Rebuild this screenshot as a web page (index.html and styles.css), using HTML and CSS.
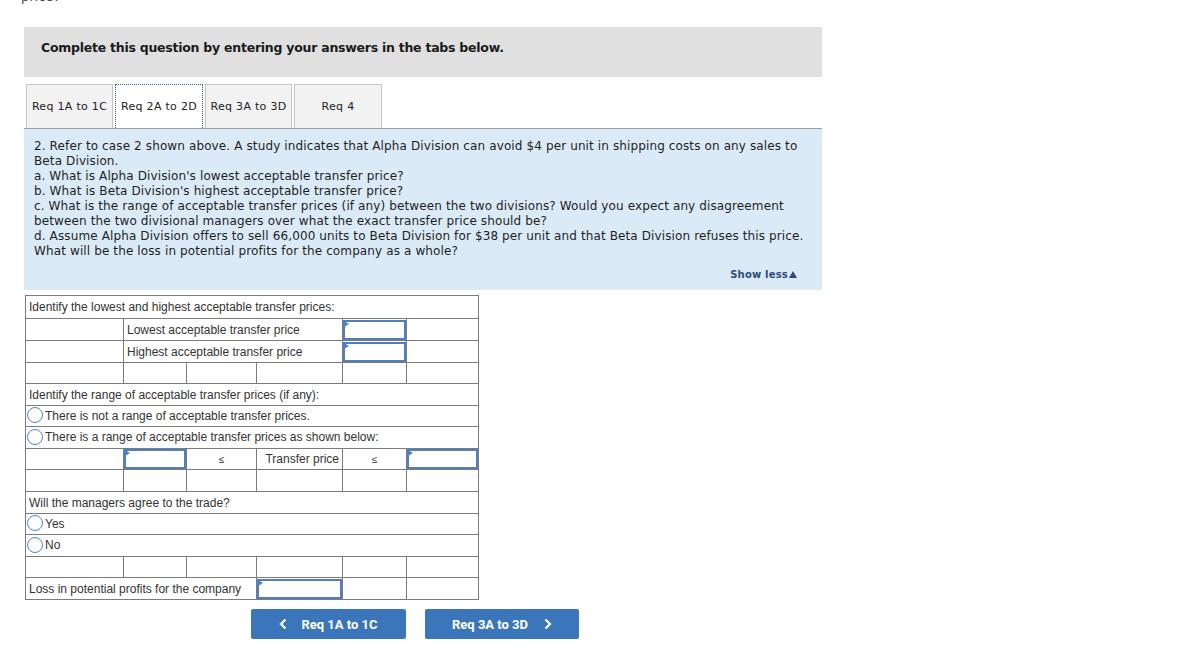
FILE: index.html
```html
<!DOCTYPE html>
<html>
<head>
<meta charset="utf-8">
<title>Transfer pricing</title>
<link rel="stylesheet" href="styles.css">
</head>
<body>
<div class="page">
  <div class="prev">price?</div>
  <div class="instructions">Complete this question by entering your answers in the tabs below.</div>
  <div class="tabs">
    <div class="tab t1">Req 1A to 1C</div>
    <div class="tab t2 active">Req 2A to 2D</div>
    <div class="tab t3">Req 3A to 3D</div>
    <div class="tab t4">Req 4</div>
  </div>
  <div class="question">
    <p>2. Refer to case 2 shown above. A study indicates that Alpha Division can avoid $4 per unit in shipping costs on any sales to Beta Division.</p>
    <p>a. What is Alpha Division's lowest acceptable transfer price?</p>
    <p>b. What is Beta Division's highest acceptable transfer price?</p>
    <p>c. What is the range of acceptable transfer prices (if any) between the two divisions? Would you expect any disagreement between the two divisional managers over what the exact transfer price should be?</p>
    <p>d. Assume Alpha Division offers to sell 66,000 units to Beta Division for $38 per unit and that Beta Division refuses this price. What will be the loss in potential profits for the company as a whole?</p>
    <div class="showless">Show less<span class="tri"></span></div>
  </div>
  <table class="answer">
    <colgroup>
      <col class="c1"><col class="c2"><col class="c3"><col class="c4"><col class="c5"><col class="c6">
    </colgroup>
    <tr class="r23"><td colspan="6">Identify the lowest and highest acceptable transfer prices:</td></tr>
    <tr class="r22"><td></td><td colspan="3">Lowest acceptable transfer price</td><td class="in"><div class="field"></div></td><td></td></tr>
    <tr class="r22"><td></td><td colspan="3">Highest acceptable transfer price</td><td class="in"><div class="field"></div></td><td></td></tr>
    <tr class="r21"><td></td><td></td><td></td><td></td><td></td><td></td></tr>
    <tr class="r22"><td colspan="6">Identify the range of acceptable transfer prices (if any):</td></tr>
    <tr class="r21"><td colspan="6" class="opt"><span class="radio"></span>There is not a range of acceptable transfer prices.</td></tr>
    <tr class="r22"><td colspan="6" class="opt"><span class="radio"></span>There is a range of acceptable transfer prices as shown below:</td></tr>
    <tr class="r21"><td></td><td class="in"><div class="field"></div></td><td class="le">≤</td><td class="right">Transfer price</td><td class="le">≤</td><td class="in"><div class="field"></div></td></tr>
    <tr class="r22"><td></td><td></td><td></td><td></td><td></td><td></td></tr>
    <tr class="r22"><td colspan="6">Will the managers agree to the trade?</td></tr>
    <tr class="r21"><td colspan="6" class="opt"><span class="radio"></span>Yes</td></tr>
    <tr class="r22"><td colspan="6" class="opt"><span class="radio"></span>No</td></tr>
    <tr class="r21"><td></td><td></td><td></td><td></td><td></td><td></td></tr>
    <tr class="r22"><td colspan="3">Loss in potential profits for the company</td><td class="in"><div class="field"></div></td><td></td><td></td></tr>
  </table>
  <div class="nav">
    <div class="btn prev-btn">
      <svg class="chev" width="8" height="12" viewBox="0 0 8 12"><polyline points="6.5,1.5 2,6 6.5,10.5" fill="none" stroke="#fff" stroke-width="2.2"/></svg>
      <span>Req 1A to 1C</span>
    </div>
    <div class="btn next-btn">
      <span>Req 3A to 3D</span>
      <svg class="chev" width="8" height="12" viewBox="0 0 8 12"><polyline points="1.5,1.5 6,6 1.5,10.5" fill="none" stroke="#fff" stroke-width="2.2"/></svg>
    </div>
  </div>
</div>
</body>
</html>
```

FILE: styles.css
```css
* { box-sizing: border-box; }
body {
  margin: 0;
  background: #fff;
  color: #222;
  font-family: "DejaVu Sans", Verdana, sans-serif;
}
.page {
  width: 822px;
  padding-left: 24px;
}
.prev {
  height: 15px;
  margin-top: -11px;
  margin-left: -3px;
  font-size: 13px;
  line-height: 15px;
  color: #444;
}
.instructions {
  margin-top: 23px;
  height: 50px;
  background: #e0e0e0;
  padding: 13px 17px 0;
  font-size: 12.5px;
  letter-spacing: -0.25px;
  line-height: 15px;
  font-weight: bold;
  color: #1a1a1a;
}
.tabs {
  display: flex;
  gap: 2px;
  margin-top: 7px;
  padding-left: 2px;
  border-bottom: 1px solid #9e9e9e;
}
.tab {
  height: 44px;
  border: 1px solid #c6c6c6;
  border-bottom: none;
  background: #f2f2f2;
  font-size: 11px;
  letter-spacing: 0.3px;
  color: #222;
  display: flex;
  align-items: center;
  justify-content: center;
}
.t1 { width: 87px; }
.t2 { width: 88px; }
.t3 { width: 87px; }
.t4 { width: 88px; }
.tab.active {
  background: #fff;
  border: 1px dotted #35609c;
  border-bottom: none;
}
.question {
  background: #dbeaf7;
  padding: 10px 10px 8px;
  font-size: 12px;
  letter-spacing: 0.12px;
  line-height: 15px;
  color: #1e1e1e;
}
.question p { margin: 0; }
.showless {
  margin-top: 8px;
  margin-right: 15px;
  display: flex;
  justify-content: flex-end;
  align-items: center;
  gap: 1px;
  font-size: 10px;
  letter-spacing: 0.2px;
  line-height: 15px;
  font-weight: bold;
  color: #2c4a7c;
}
.tri {
  width: 0;
  height: 0;
  border-left: 4px solid transparent;
  border-right: 4px solid transparent;
  border-bottom: 7px solid #2c4a7c;
}
.answer {
  margin-top: 5px;
  margin-left: 1px;
  width: 453px;
  table-layout: fixed;
  border-collapse: collapse;
  font-family: "Liberation Sans", Arial, sans-serif;
  font-size: 12px;
  color: #333;
}
.c1 { width: 98px; }
.c2 { width: 63px; }
.c3 { width: 70px; }
.c4 { width: 86px; }
.c5 { width: 64px; }
.c6 { width: 72px; }
.answer td {
  border: 1px solid #7c7c7c;
  padding: 0 3px;
  white-space: nowrap;
  overflow: hidden;
}
.r23 td { height: 23px; }
.r22 td { height: 22px; }
.r21 td { height: 21px; }
.answer td.in { padding: 0; }
.field {
  position: relative;
  height: 20px;
  border: 2px solid #4f7fbd;
}
.field::before {
  content: "";
  position: absolute;
  left: -1px;
  top: -1px;
  border-left: 5px solid #3f82d8;
  border-top: 3px solid transparent;
  border-bottom: 3px solid transparent;
}
.answer td.opt { padding-left: 1px; }
.radio {
  display: inline-block;
  width: 16px;
  height: 16px;
  border: 1.5px solid #4c86c9;
  border-radius: 50%;
  background: #fff;
  vertical-align: middle;
  margin-right: 2px;
  margin-top: -2px;
}
.answer td.le { text-align: center; font-size: 10px; }
.answer td.right { text-align: right; }
.nav {
  display: flex;
  gap: 19px;
  margin: 9px 0 0 227px;
}
.btn {
  height: 30px;
  border-radius: 2px;
  background: #3a76b9;
  color: #fff;
  font-family: Roboto, "Liberation Sans", sans-serif;
  font-weight: bold;
  font-size: 13px;
  display: flex;
  align-items: center;
  justify-content: center;
}
.prev-btn { width: 155px; gap: 14px; }
.next-btn { width: 154px; gap: 16px; }
.chev { display: block; }
```
